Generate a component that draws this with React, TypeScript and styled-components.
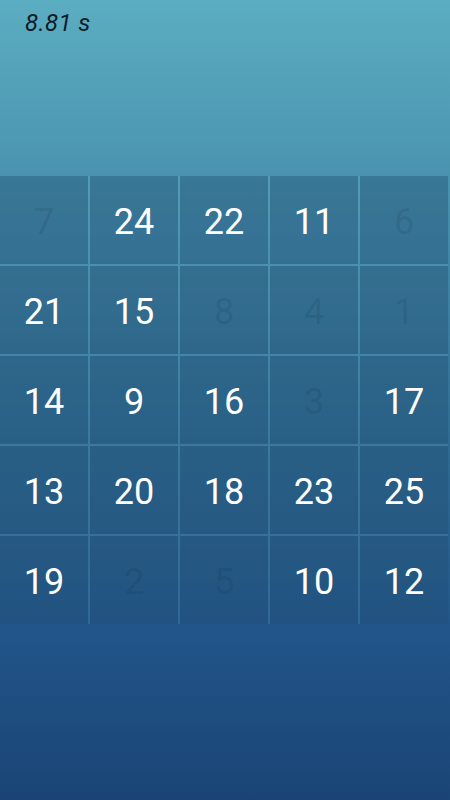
import styled, { createGlobalStyle } from "styled-components";

const GlobalStyle = createGlobalStyle`
  html, body {
    margin: 0;
    padding: 0;
    height: 100%;
  }
  body {
    font-family: Roboto, "Noto Sans", sans-serif;
  }
  #root {
    height: 100%;
  }
`

const Screen = styled.main`
  width: 450px;
  height: 800px;
  background: linear-gradient(180deg, #5badc1 0%, #4a93b0 22%, #2f6b92 55%, #22568a 78%, #1a4476 100%);
  display: flex;
  flex-direction: column;
  overflow: hidden;
`

const Timer = styled.div`
  height: 176px;
  padding: 9px 0 0 25px;
  box-sizing: border-box;
  font-size: 24px;
  font-style: italic;
  color: #0e1c2a;
  letter-spacing: 0.4px;
`

const Board = styled.div`
  display: grid;
  grid-template-columns: repeat(5, 88px);
  grid-auto-rows: 88px;
  gap: 2px;
  width: 448px;
  background: rgba(140, 210, 235, 0.14);
`

const Tile = styled.div<{ $done: boolean }>`
  display: flex;
  align-items: center;
  justify-content: center;
  background: rgba(0, 35, 75, 0.3);
  font-size: 36px;
  color: ${p => (p.$done ? "rgba(15, 45, 70, 0.14)" : "#ffffff")};
  padding-top: 4px;
  box-sizing: border-box;
`

const tiles = [
  7, 24, 22, 11, 6,
  21, 15, 8, 4, 1,
  14, 9, 16, 3, 17,
  13, 20, 18, 23, 25,
  19, 2, 5, 10, 12,
]

const cleared = new Set([7, 6, 8, 4, 1, 3, 2, 5])

export default function App() {
  return (
    <>
      <GlobalStyle/>
      <Screen>
        <Timer>8.81 s</Timer>
        <Board>
          {tiles.map(n => (
            <Tile key={n} $done={cleared.has(n)}>{n}</Tile>
          ))}
        </Board>
      </Screen>
    </>
  )
}
